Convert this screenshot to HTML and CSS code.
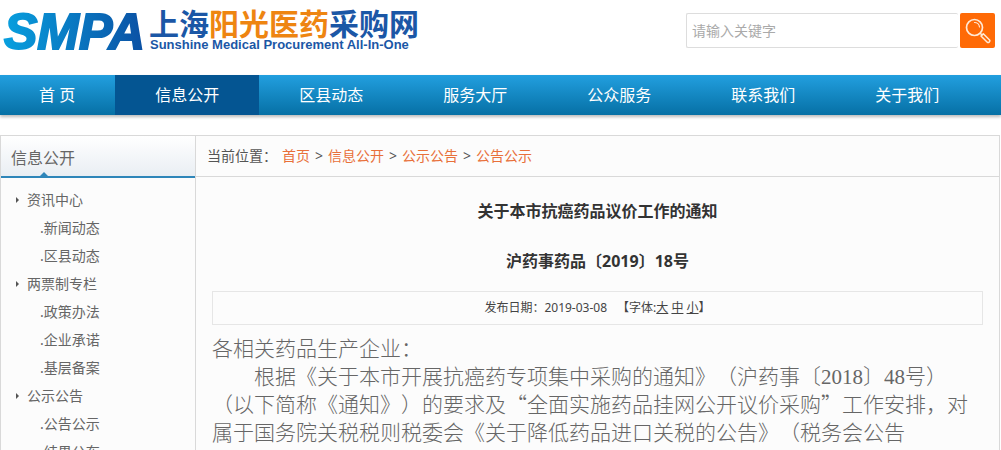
FILE: index.html
```html
<!DOCTYPE html>
<html lang="zh-CN">
<head>
<meta charset="utf-8">
<meta name="viewport" content="width=device-width, initial-scale=1">
<title>上海阳光医药采购网</title>
<link rel="stylesheet" href="styles.css">
</head>
<body>
<header class="site-header">
  <a class="logo" href="#">
    <svg class="logo-mark" viewBox="0 0 146 54">
      <defs>
        <linearGradient id="mark" gradientUnits="userSpaceOnUse" x1="0" y1="0" x2="146" y2="0">
          <stop offset="0" stop-color="#08a0df"/>
          <stop offset="1" stop-color="#0b4ea2"/>
        </linearGradient>
      </defs>
      <text x="1" y="45" fill="url(#mark)" stroke="url(#mark)" stroke-width="2">SMPA</text>
    </svg>
    <span class="logo-names">
      <span class="logo-cn">上海<span class="logo-accent">阳光医药</span>采购网</span>
      <span class="logo-en">Sunshine Medical Procurement All-In-One</span>
    </span>
  </a>
  <form class="search" role="search">
    <input class="search-input" type="text" placeholder="请输入关键字" aria-label="请输入关键字">
    <button class="search-button" type="submit" aria-label="搜索">
      <svg class="search-icon" viewBox="0 0 26 26" fill="none" stroke="#ffe9d6" stroke-linecap="round" stroke-linejoin="round">
        <circle cx="9.500" cy="9.500" r="8" stroke-width="1.700"/>
        <path d="M9.500 4.500a5 5 0 0 1 5 4.500" stroke-width="1.200"/>
        <path d="M15.500 15.500l1.500 1.500" stroke-width="1.500"/>
        <path d="M16 18l2.300-2.300 6 6a1.600 1.600 0 0 1-2.300 2.300z" stroke-width="1.500"/>
      </svg>
    </button>
  </form>
</header>

<nav class="main-nav">
  <a class="nav-link nav-home" href="#">首 页</a>
  <a class="nav-link nav-active" href="#">信息公开</a>
  <a class="nav-link" href="#">区县动态</a>
  <a class="nav-link" href="#">服务大厅</a>
  <a class="nav-link" href="#">公众服务</a>
  <a class="nav-link" href="#">联系我们</a>
  <a class="nav-link" href="#">关于我们</a>
</nav>

<div class="panel">
  <aside class="sidebar">
    <h2 class="sidebar-title">信息公开</h2>
    <ul class="menu">
      <li><a class="menu-group" href="#">资讯中心</a></li>
      <li><a class="menu-item" href="#">.新闻动态</a></li>
      <li><a class="menu-item" href="#">.区县动态</a></li>
      <li><a class="menu-group" href="#">两票制专栏</a></li>
      <li><a class="menu-item" href="#">.政策办法</a></li>
      <li><a class="menu-item" href="#">.企业承诺</a></li>
      <li><a class="menu-item" href="#">.基层备案</a></li>
      <li><a class="menu-group" href="#">公示公告</a></li>
      <li><a class="menu-item" href="#">.公告公示</a></li>
      <li><a class="menu-item" href="#">.结果公布</a></li>
    </ul>
  </aside>
  <main class="content">
    <div class="crumbs">
      <span>当前位置：</span>
      <a href="#">首页</a>
      <span>&gt;</span>
      <a href="#">信息公开</a>
      <span>&gt;</span>
      <a href="#">公示公告</a>
      <span>&gt;</span>
      <a href="#">公告公示</a>
    </div>
    <article class="article">
      <h1 class="article-title">关于本市抗癌药品议价工作的通知</h1>
      <p class="article-number">沪药事药品〔2019〕18号</p>
      <div class="article-meta">
        <span>发布日期：2019-03-08</span>
        <span class="font-size">【字体:<a href="#">大</a> <a href="#">中</a> <a href="#">小</a>】</span>
      </div>
      <div class="article-body">
        <p>各相关药品生产企业：</p>
        <p class="indent">根据《关于本市开展抗癌药专项集中采购的通知》（沪药事〔<span class="num">2018</span>〕<span class="num">48</span>号）（以下简称《通知》）的要求及“全面实施药品挂网公开议价采购”工作安排，对属于国务院关税税则税委会《关于降低药品进口关税的公告》（税务会公告</p>
      </div>
    </article>
  </main>
</div>
</body>
</html>
```
FILE: styles.css
```css
* {
  box-sizing: border-box;
}

body {
  margin: 0;
  background: #fff;
  color: #666;
  font: 14px/28px "Noto Sans", "Noto Sans CJK SC", sans-serif;
}

a {
  color: inherit;
  text-decoration: none;
}

h1, h2, p, ul {
  margin: 0;
  padding: 0;
}

.site-header {
  display: flex;
  justify-content: space-between;
  align-items: flex-start;
  height: 75px;
}

.logo {
  display: flex;
  padding: 4px 0 0 3px;
}

.logo-mark {
  width: 146px;
  height: 54px;
  font: italic 700 50px "Liberation Sans", Arial, sans-serif;
}

.logo-names {
  display: flex;
  flex-direction: column;
  color: #1b57a6;
}

.logo-cn {
  padding-top: 2px;
  font: 700 30px/32px "Noto Sans CJK SC", sans-serif;
}

.logo-accent {
  color: #ee8511;
}

.logo-en {
  padding-left: 1px;
  font: 700 13px/14px "Liberation Sans", Arial, sans-serif;
}

.search {
  display: flex;
  gap: 2px;
  padding: 13px 6px 0 0;
}

.search-input {
  width: 272px;
  height: 35px;
  padding: 0 5px;
  border: 1px solid #ddd;
  border-right: 0;
  border-radius: 2px;
  font: 14px "Noto Sans", "Noto Sans CJK SC", sans-serif;
}

.search-input::placeholder {
  color: #aaa;
}

.search-button {
  display: flex;
  align-items: center;
  justify-content: center;
  width: 35px;
  height: 35px;
  padding: 0;
  border: 0;
  border-radius: 2px;
  background: #ff6a06;
}

.search-icon {
  width: 26px;
  height: 26px;
}

.main-nav {
  display: flex;
  background: linear-gradient(#229fdf, #0670a5);
  box-shadow: 0 2px 3px #bbb;
}

.nav-link {
  padding: 0 40px;
  color: #fff;
  font-size: 16px;
  line-height: 40px;
}

.nav-home {
  padding-left: 39px;
}

.nav-active {
  background: #045592;
}

.panel {
  display: flex;
  margin: 20px 1px 0 0;
  border: 1px solid #d9d9d9;
  background: #fcfcfc;
}

.sidebar {
  flex: 0 0 195px;
  border-right: 1px solid #d9d9d9;
}

.sidebar-title {
  position: relative;
  padding: 4px 10px 0;
  border-bottom: 2px solid #2e86b9;
  background: linear-gradient(#fff, #e9eef3);
  color: #666;
  font-size: 16px;
  font-weight: 400;
  line-height: 36px;
}

.sidebar-title::after {
  content: "";
  position: absolute;
  left: 39px;
  bottom: 0;
  border: 4px solid transparent;
  border-top: 0;
  border-bottom-color: #2e86b9;
}

.menu {
  padding: 8px 0;
  list-style: none;
}

.menu-group {
  display: flex;
  align-items: center;
  gap: 8px;
  padding-left: 15px;
}

.menu-group::before {
  content: "";
  border: 3px solid transparent;
  border-left-color: #555;
  border-right: 0;
}

.menu-item {
  display: block;
  padding-left: 39px;
}

.content {
  flex: 1;
  min-width: 0;
}

.crumbs {
  display: flex;
  flex-wrap: wrap;
  gap: 0 5px;
  padding: 0 11px;
  border-bottom: 1px solid #d9d9d9;
  color: #555;
  line-height: 40px;
}

.crumbs a {
  color: #e8703a;
}

.article {
  padding: 20px 16px;
  color: #444;
}

.article-title,
.article-number {
  color: #333;
  font-size: 16px;
  font-weight: 700;
  line-height: 28px;
  text-align: center;
}

.article-number {
  padding-top: 22px;
}

.article-meta {
  display: flex;
  justify-content: center;
  gap: 10px;
  margin: 16px 0 8px;
  border: 1px solid #e6e6e6;
  font-size: 12px;
  line-height: 32px;
}

.font-size a {
  text-decoration: underline;
}

.article-body {
  color: #666;
  font: 300 21px/28px "Noto Sans CJK SC", sans-serif;
  text-spacing-trim: space-all;
}

.indent {
  text-indent: 2em;
}

.num {
  font-family: "Liberation Serif", serif;
  line-height: 1;
}
```
